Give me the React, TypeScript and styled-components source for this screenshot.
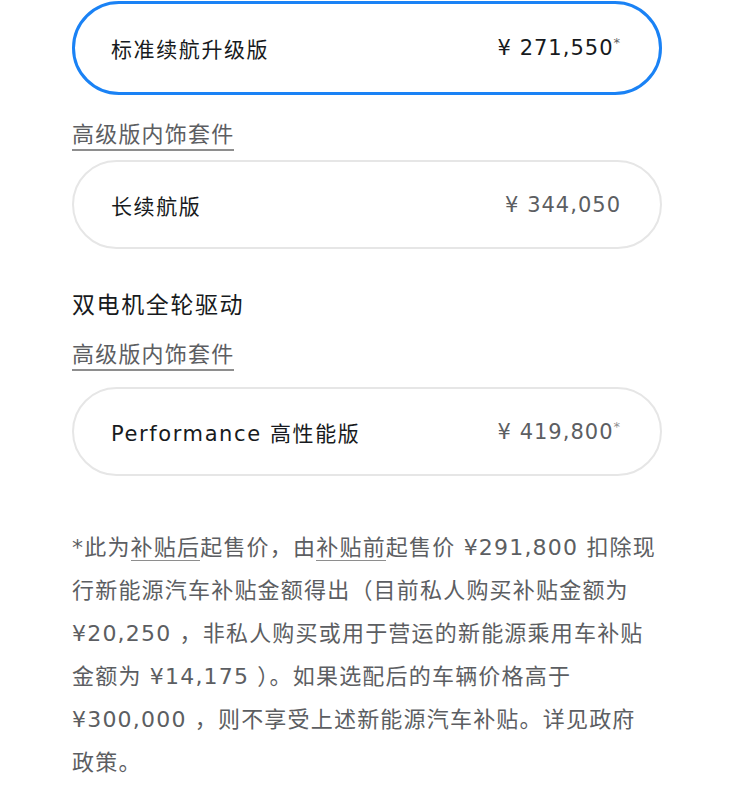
import React from "react";
import styled, { createGlobalStyle } from "styled-components";

const Global = createGlobalStyle`
  html, body { margin: 0; padding: 0; background: #ffffff; }
  body {
    font-family: "DejaVu Sans", "Noto Sans CJK SC", sans-serif;
    color: #171a20;
    -webkit-font-smoothing: antialiased;
  }
`;

const Page = styled.div`
  width: 590px;
  padding: 1px 0 0 72px;
  display: flex;
  flex-direction: column;
`;

const Card = styled.div<{ $selected?: boolean }>`
  box-sizing: border-box;
  height: ${(p) => (p.$selected ? "94px" : "89px")};
  border-radius: 50px;
  border: ${(p) => (p.$selected ? "3px solid #1a82f5" : "2px solid #e6e6e6")};
  display: flex;
  align-items: center;
  justify-content: space-between;
  padding: 0 ${(p) => (p.$selected ? "38px" : "39px")} 0 ${(p) => (p.$selected ? "36px" : "37px")};
  font-size: 21px;
`;

const Name = styled.span`
  color: #171a20;
  letter-spacing: 1.6px;
`;

const Price = styled.span<{ $selected?: boolean }>`
  color: ${(p) => (p.$selected ? "#171a20" : "#5c5e62")};
  letter-spacing: 1px;
  sup {
    font-size: 13px;
    vertical-align: top;
    position: relative;
    top: -1px;
    margin-left: 0;
    color: ${(p) => (p.$selected ? "#5c5e62" : "#8e8e8e")};
  }
`;

const Label = styled.div<{ $top: number; $gap: number }>`
  align-self: flex-start;
  margin-top: ${(p) => p.$top}px;
  margin-bottom: ${(p) => p.$gap}px;
  font-size: 22px;
  line-height: 28px;
  letter-spacing: 1.2px;
  color: #5c5e62;
  border-bottom: 2px solid #8e8e8e;
`;

const Heading = styled.div`
  margin-top: 41px;
  font-size: 23px;
  line-height: 30px;
  letter-spacing: 1.6px;
  color: #171a20;
`;

const Note = styled.p`
  margin: 50px 0 0 0;
  font-size: 22px;
  line-height: 43px;
  color: #5c5e62;
  letter-spacing: 1.2px;
  u {
    text-decoration: none;
    border-bottom: 1.5px solid #8e8e8e;
  }
`;

const Keep = styled.span`
  white-space: nowrap;
`;

export default function App() {
  return (
    <>
      <Global />
      <Page>
        <Card $selected>
          <Name>标准续航升级版</Name>
          <Price $selected>¥ 271,550<sup>*</sup></Price>
        </Card>
        <Label $top={26} $gap={9}>高级版内饰套件</Label>
        <Card>
          <Name>长续航版</Name>
          <Price>¥ 344,050</Price>
        </Card>
        <Heading>双电机全轮驱动</Heading>
        <Label $top={21} $gap={16}>高级版内饰套件</Label>
        <Card>
          <Name>Performance 高性能版</Name>
          <Price>¥ 419,800<sup>*</sup></Price>
        </Card>
        <Note>
          *此为<u>补贴后</u>起售价，由<u>补贴前</u>起售价 ¥291,800 扣除现行新能源汽车补贴金额得出（目前私人购买补贴金额为 ¥20,250 ，非私人购买或用于营运的新能源乘用车补贴金额为 ¥14,175 ）。如果选配后的车辆价格高于 ¥300,000 ，则不享受上述新能源汽车补贴。详见政府<Keep>政策。</Keep>
        </Note>
      </Page>
    </>
  );
}
